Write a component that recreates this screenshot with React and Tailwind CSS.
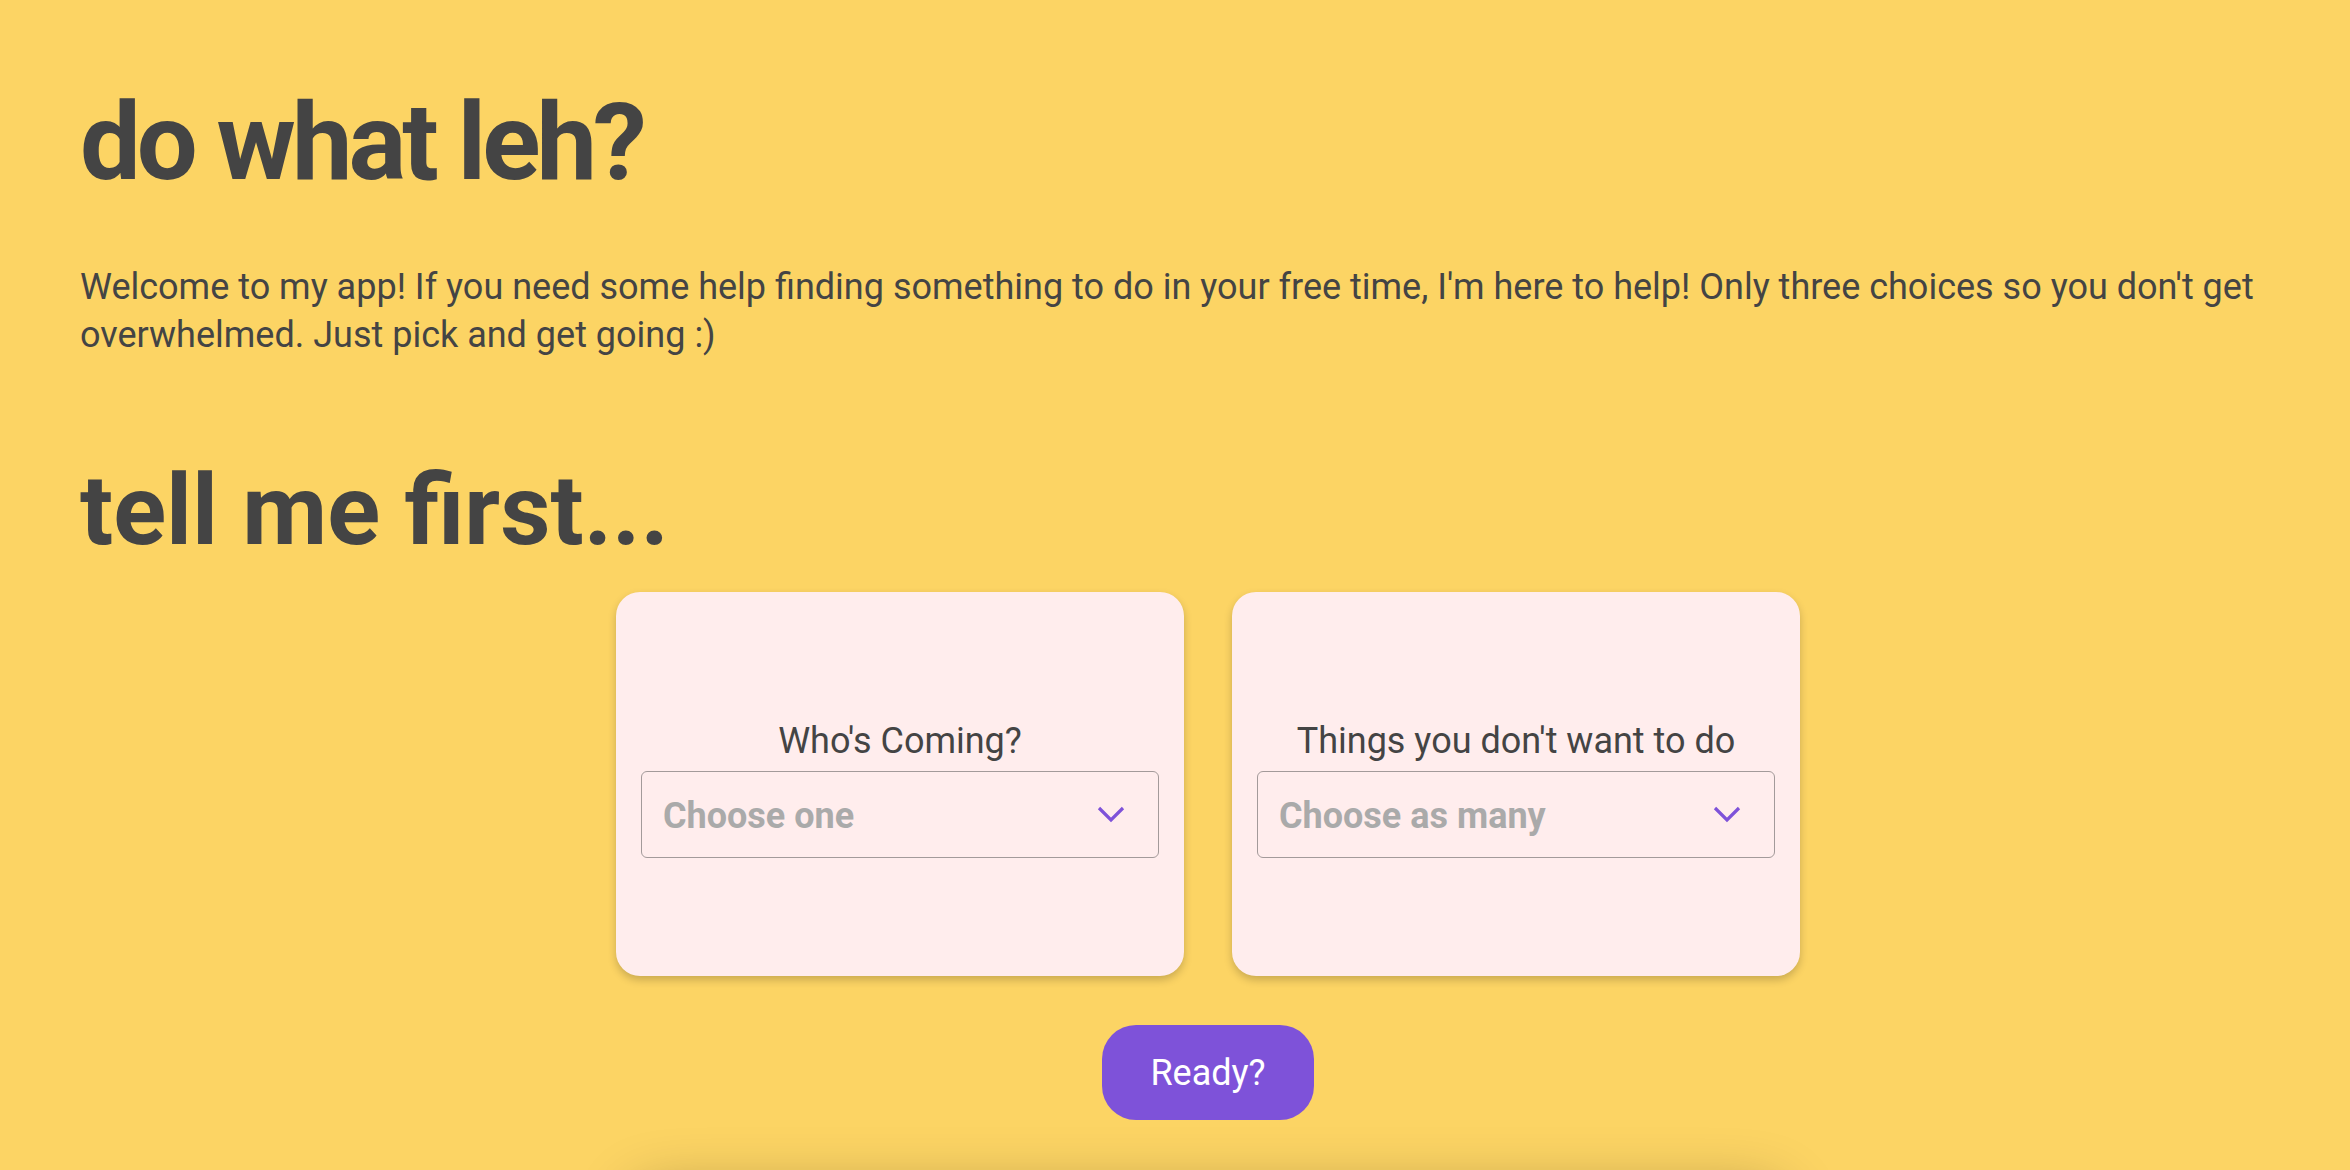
import React from "react";

function Chevron() {
  return (
    <svg width="28" height="18" viewBox="0 0 28 18" fill="none">
      <polyline points="2,3 14,15 26,3" stroke="#7e52d9" strokeWidth="3.2" strokeLinecap="butt" strokeLinejoin="miter" />
    </svg>
  );
}

function Card({ label, placeholder }) {
  return (
    <div className="w-[568px] h-[384px] rounded-[24px] bg-[#ffeded] shadow-[0_4px_8px_rgba(0,0,0,0.2)] flex flex-col items-center justify-center px-[25px] pt-[9px]">
      <div className="text-[36px] leading-[42px] text-[#444444]">{label}</div>
      <div className="mt-[9px] w-full h-[87px] border-[1.5px] border-[#a39a9a] rounded-[6px] flex items-center justify-between pl-[21px] pr-[33px]">
        <span className="text-[36px] font-bold text-[#aaaaaa] pt-[4px]">{placeholder}</span>
        <Chevron />
      </div>
    </div>
  );
}

export default function App() {
  return (
    <div className="min-h-[1400px] bg-[#fcd464] overflow-hidden" style={{ fontFamily: "Roboto, 'Noto Sans', sans-serif" }}>
      <div className="pl-[80px] pr-[80px] pt-[88px]">
        <h1 className="text-[108px] leading-none font-bold tracking-[-4px] text-[#444444]">do what leh?</h1>
        <p className="mt-[67px] text-[36px] leading-[48px] text-[#444444]">
          Welcome to my app! If you need some help finding something to do in your free time, I'm here to help! Only three choices so you don't get overwhelmed. Just pick and get going :)
        </p>
        <h2 className="mt-[103px] text-[98px] leading-none font-bold text-[#444444]">tell me first...</h2>
      </div>
      <div className="pl-[66px] mt-[32px] flex flex-col items-center">
        <div className="flex gap-[48px]">
          <Card label="Who's Coming?" placeholder="Choose one" />
          <Card label="Things you don't want to do" placeholder="Choose as many" />
        </div>
        <button className="mt-[49px] w-[212px] h-[95px] rounded-[34px] bg-[#7e52d9] text-white text-[36px]">Ready?</button>
        <div className="mt-[70px] w-[1150px] h-[400px] rounded-[24px] bg-[#fcd464] shadow-[0_0_60px_rgba(0,0,0,0.3)]"></div>
      </div>
    </div>
  );
}
